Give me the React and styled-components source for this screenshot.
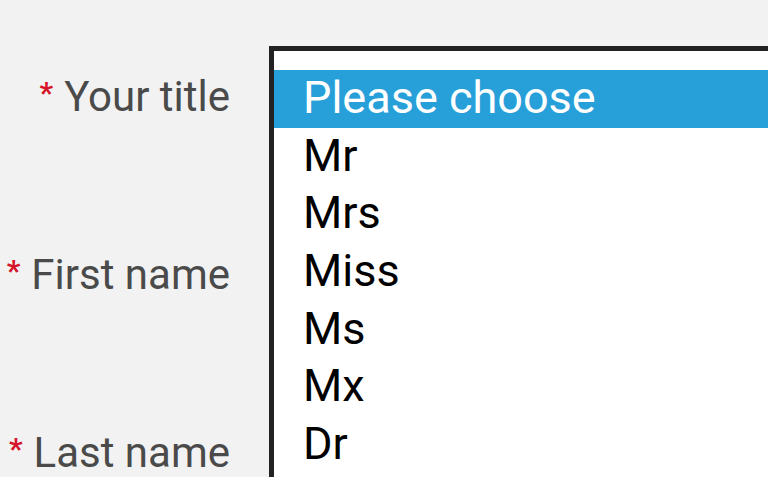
import React from "react";
import styled, { createGlobalStyle } from "styled-components";

const Global = createGlobalStyle`
  html, body { margin: 0; padding: 0; background: #f2f2f2; overflow: hidden; }
  body { width: 768px; height: 477px; }
`;

const Page = styled.div`
  display: grid;
  grid-template-columns: 230px 540px;
  column-gap: 39px;
  padding-top: 46px;
  height: 431px;
  overflow: hidden;
  font-family: Roboto, "Noto Sans", sans-serif;
`;

const Labels = styled.div`
  display: flex;
  flex-direction: column;
  padding-top: 22px;
`;

const Label = styled.label`
  display: flex;
  justify-content: flex-end;
  align-items: flex-start;
  height: 178px;
  line-height: 57.7px;
  font-size: 42px;
  color: #4a4a4a;
  white-space: nowrap;
`;

const Star = styled.span`
  color: #d6142a;
  font-size: 30px;
  font-weight: 700;
  line-height: 1;
  margin-top: 10px;
  margin-right: 11px;
`;

const ListBox = styled.div`
  border: 5px solid #222;
  border-bottom: none;
  background: #fff;
  padding-top: 19px;
`;

const Option = styled.div`
  height: 57.7px;
  line-height: 55px;
  padding-left: 29px;
  font-size: 45px;
  color: ${(p) => (p.$selected ? "#fff" : "#000")};
  background: ${(p) => (p.$selected ? "#27a0da" : "transparent")};
`;

const options = ["Please choose", "Mr", "Mrs", "Miss", "Ms", "Mx", "Dr"];

export default function App() {
  return (
    <>
      <Global />
      <Page>
        <Labels>
          <Label><Star>*</Star>Your title</Label>
          <Label><Star>*</Star>First name</Label>
          <Label><Star>*</Star>Last name</Label>
        </Labels>
        <ListBox role="listbox">
          {options.map((o, i) => (
            <Option key={o} $selected={i === 0}>{o}</Option>
          ))}
        </ListBox>
      </Page>
    </>
  );
}
